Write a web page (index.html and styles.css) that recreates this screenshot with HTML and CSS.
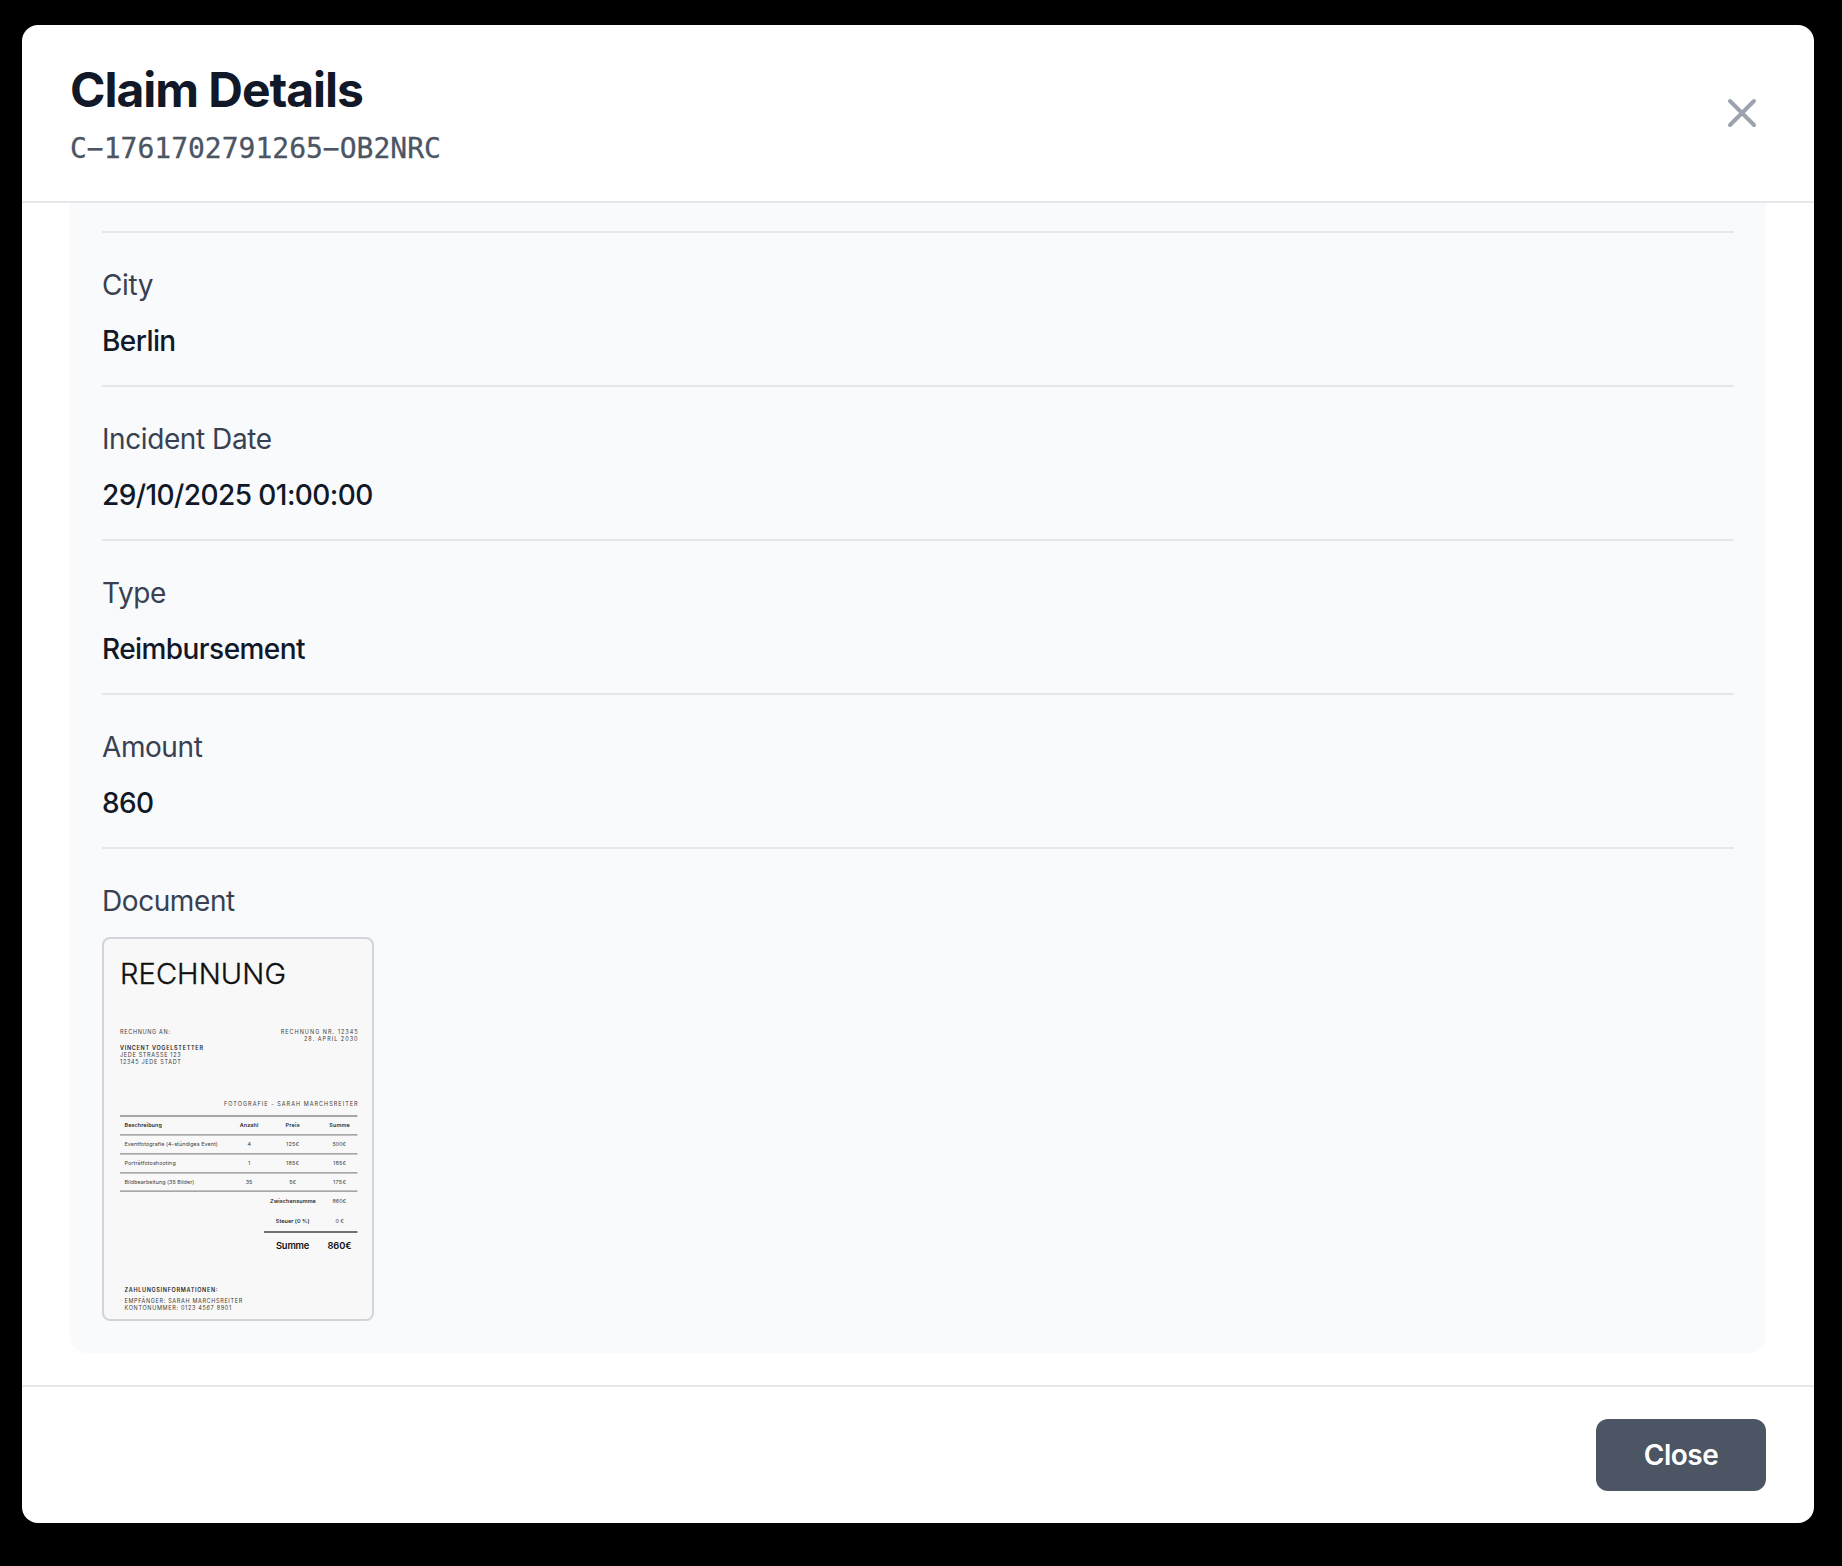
FILE: index.html
```html
<!DOCTYPE html>
<html lang="en">
<head>
<meta charset="utf-8">
<title>Claim Details</title>
<link rel="stylesheet" href="styles.css">
</head>
<body>
<section class="modal" role="dialog" aria-labelledby="modal-title">
  <header class="modal-header">
    <div>
      <h1 class="modal-title" id="modal-title">Claim Details</h1>
      <p class="claim-id">C−1761702791265−OB2NRC</p>
    </div>
    <button class="icon-button" type="button" aria-label="Dismiss">
      <svg width="48" height="48" viewBox="0 0 24 24" fill="none" stroke="currentColor" stroke-width="2" stroke-linecap="round"><path d="M6 18L18 6M6 6l12 12"/></svg>
    </button>
  </header>
  <div class="modal-body">
    <dl class="details">
      <div class="field"><dt>City</dt><dd>Berlin</dd></div>
      <div class="field"><dt>Incident Date</dt><dd>29/10/2025 01:00:00</dd></div>
      <div class="field"><dt>Type</dt><dd>Reimbursement</dd></div>
      <div class="field"><dt>Amount</dt><dd>860</dd></div>
      <div class="field"><dt>Document</dt>
        <dd class="document">
          <svg class="invoice" width="268" height="380" viewBox="2 2 268 380">
            <text class="heading" x="18" y="47.2" textLength="166">RECHNUNG</text>
            <g class="caps">
              <text x="18" y="97" textLength="50">RECHNUNG AN:</text>
              <text x="178.7" y="97" textLength="76.9">RECHNUNG NR. 12345</text>
              <text x="202" y="104.4" textLength="53.6">28. APRIL 2030</text>
              <text class="bold" x="18" y="112.5" textLength="83">VINCENT VOGELSTETTER</text>
              <text x="18" y="119.8" textLength="60.7">JEDE STRASSE 123</text>
              <text x="18" y="127.1" textLength="60.7">12345 JEDE STADT</text>
              <text x="122" y="169.3" textLength="133.6">FOTOGRAFIE - SARAH MARCHSREITER</text>
              <text class="bold" x="22.5" y="355" textLength="93">ZAHLUNGSINFORMATIONEN:</text>
              <text x="22.5" y="365.7" textLength="117.7">EMPFÄNGER: SARAH MARCHSREITER</text>
              <text x="22.5" y="373.2" textLength="106.7">KONTONUMMER: 0123 4567 8901</text>
            </g>
            <path class="rule" d="M18 179H255.5M18 197.9H255.5M18 216.9H255.5M18 235.8H255.5M18 254.2H255.5"/>
            <g class="cells bold">
              <text x="22.5" y="190.4" textLength="37.3">Beschreibung</text>
              <text x="137.7" y="190.4" textLength="18.7">Anzahl</text>
              <text x="183.5" y="190.4" textLength="14.3">Preis</text>
              <text x="227.3" y="190.4" textLength="20.4">Summe</text>
              <text x="168" y="266" textLength="45.8">Zwischensumme</text>
              <text x="173.8" y="286" textLength="33.7">Steuer (0 %)</text>
            </g>
            <g class="cells">
              <text x="22.5" y="209.3" textLength="93.3">Eventfotografie (4-stündiges Event)</text>
              <text x="145.4" y="209.3">4</text>
              <text x="184" y="209.3" textLength="13">125€</text>
              <text x="230.5" y="209.3" textLength="13.7">500€</text>
              <text x="22.5" y="228" textLength="51.2">Porträtfotoshooting</text>
              <text x="146" y="228">1</text>
              <text x="184" y="228" textLength="13">185€</text>
              <text x="231" y="228" textLength="13">185€</text>
              <text x="22.5" y="246.8" textLength="69.7">Bildbearbeitung (35 Bilder)</text>
              <text x="143.8" y="246.8" textLength="6.6">35</text>
              <text x="187.3" y="246.8" textLength="6.7">5€</text>
              <text x="231" y="246.8" textLength="13">175€</text>
              <text x="230.5" y="266" textLength="13.7">860€</text>
              <text x="233.5" y="286" textLength="8.4">0 €</text>
            </g>
            <path class="total-rule" d="M162 295H255.5"/>
            <g class="total">
              <text x="174" y="312.3" textLength="33.3">Summe</text>
              <text x="225.4" y="312.3" textLength="24.2">860€</text>
            </g>
          </svg>
        </dd>
      </div>
    </dl>
  </div>
  <footer class="modal-footer">
    <button class="close-button" type="button">Close</button>
  </footer>
</section>
</body>
</html>
```
FILE: styles.css
```css
* { box-sizing: border-box; margin: 0; }

body {
  height: 1566px;
  padding: 25px 28px 43px 22px;
  background: #000;
  color: #111827;
  font: 400 28px/40px Inter, "Liberation Sans", sans-serif;
  overflow: hidden;
}

.modal {
  height: 1498px;
  display: flex;
  flex-direction: column;
  border-radius: 16px;
  background: #fff;
  overflow: hidden;
}

.modal-header {
  height: 178px;
  padding: 32px 48px;
  display: flex;
  align-items: center;
  justify-content: space-between;
  border-bottom: 2px solid #e5e7eb;
}

.modal-title {
  margin-bottom: 7px;
  padding-top: 1px;
  font-size: 48px;
  font-weight: 700;
  line-height: 64px;
  letter-spacing: -1.05px;
}

.claim-id {
  color: #4b5563;
  font-family: "DejaVu Sans Mono", monospace;
  font-size: 28px;
  line-height: 40px;
  -webkit-text-stroke: 0.3px #4b5563;
}

button { border: 0; font: inherit; }

.icon-button {
  width: 48px;
  height: 48px;
  padding: 0;
  background: none;
  color: #9ca3af;
}

.icon-button svg { display: block; }

.modal-body {
  flex: 1;
  padding: 0 48px 32px;
}

.details {
  padding: 28px 32px 32px;
  border-radius: 0 0 16px 16px;
  background: #f9fafb;
}

.field {
  padding: 32px 0 24px;
  display: flex;
  flex-direction: column;
  gap: 16px;
  border-top: 2px solid #e5e7eb;
}

.field:last-child { padding-bottom: 0; }

dt { color: #374151; letter-spacing: -0.42px; }
dd { font-weight: 500; letter-spacing: -0.57px; }

.document {
  width: 272px;
  height: 384px;
  border: 2px solid #d1d5db;
  border-radius: 8px;
  background: #f8f8f8;
  overflow: hidden;
  letter-spacing: 0;
}

.invoice { display: block; fill: #3c3c3c; }
.invoice text { font-weight: 400; }
.invoice .heading { font-size: 29px; font-weight: 300; fill: #111; stroke: #111; stroke-width: 0.35; }
.caps { font-size: 5.5px; }
.cells { font-size: 5.4px; }
.invoice .caps .bold, .invoice .cells.bold text { font-weight: 600; fill: #2a2a2a; }
.rule { stroke: #8c8c8c; stroke-width: 1.3; }
.total-rule { stroke: #444; stroke-width: 1.4; }
.total { font-size: 9.3px; fill: #111; }
.invoice .total text { font-weight: 600; }

.modal-footer {
  height: 138px;
  padding: 32px 48px;
  display: flex;
  justify-content: flex-end;
  border-top: 2px solid #e5e7eb;
}

.close-button {
  width: 170px;
  height: 72px;
  border-radius: 12px;
  background: #4b5563;
  color: #fff;
  font-weight: 600;
  letter-spacing: -0.5px;
}
```
